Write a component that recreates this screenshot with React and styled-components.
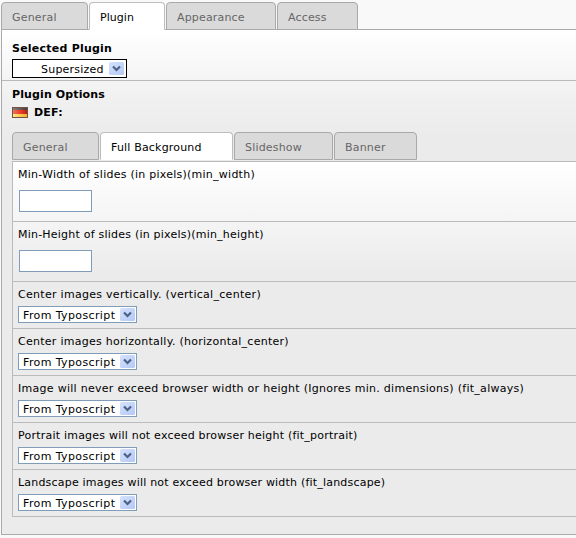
import React from "react";
import styled, { createGlobalStyle } from "styled-components";

const GlobalStyle = createGlobalStyle`
  * { box-sizing: border-box; }
  body {
    margin: 0;
    background: #f9f9f9;
    color: #000;
    font: 11px/14px Verdana, "DejaVu Sans", sans-serif;
    overflow: hidden;
  }
`;

const Page = styled.div`
  width: 576px;
  height: 538px;
  padding: 2px 0 0 1px;
  overflow: hidden;
`;

const TabBar = styled.div`
  display: flex;
  gap: 1px;
  height: ${(p) => (p.$nested ? 29 : 27)}px;
`;

const Tab = styled.div`
  flex: none;
  width: ${(p) => p.$width}px;
  height: 28px;
  padding: 8px 0 0 10px;
  border: 1px solid ${(p) => (p.$active ? "#bdbdbd" : "#a9a9a9")};
  border-bottom-color: ${(p) => (p.$active ? "#fff" : "#a9a9a9")};
  border-radius: 4px 4px 0 0;
  background: ${(p) => (p.$active ? "#fff" : "#dadada")};
  color: ${(p) => (p.$active ? "#000" : "#666")};
  line-height: 13px;
  white-space: nowrap;
  position: relative;
`;

const Text = styled.span`
  letter-spacing: ${(p) => p.$spacing || 0}px;
  white-space: nowrap;
`;

const Panel = styled.div`
  height: 506px;
  border: solid #aaa;
  border-width: 1px 0 1px 1px;
  background: linear-gradient(#fff 0, #f0f0f0 70px, #ebebeb 110px);
`;

const PluginSection = styled.section`
  height: 51px;
  padding: 12px 0 0 10px;
  border-bottom: 1px solid #b9b9b9;
`;

const OptionsSection = styled.section`
  padding: 7px 0 0 10px;
`;

const Heading = styled.div`
  height: 14px;
  font-weight: bold;
  white-space: nowrap;
`;

const Language = styled(Heading)`
  display: flex;
  align-items: center;
  gap: 6px;
  height: 20px;
  padding-top: 1px;
  margin-bottom: 10px;
`;

const Options = styled.div`
  border: solid #bbb;
  border-width: 1px 0 0 1px;
  background: linear-gradient(#fff 0, #ebebeb 112px);
`;

const Row = styled.div`
  height: ${(p) => (p.$tall ? 60 : 47)}px;
  padding: 6px 0 0 5px;
  border-bottom: 1px solid #bbb;
`;

const RowLabel = styled.div`
  height: 14px;
`;

const TextField = styled.input`
  display: block;
  width: 73px;
  height: 22px;
  margin: 8px 0 0 1px;
  padding: 0 3px;
  border: 1px solid #7f9db9;
  border-radius: 0;
  background: #fff;
  outline: none;
`;

const SelectBox = styled.div`
  display: flex;
  align-items: center;
  justify-content: space-between;
  width: ${(p) => (p.$dark ? 115 : 119)}px;
  height: ${(p) => (p.$dark ? 19 : 17)}px;
  margin-top: ${(p) => (p.$dark ? 3 : 4)}px;
  padding: 0 ${(p) => (p.$dark ? 2 : 1)}px 0 ${(p) => (p.$dark ? 28 : 4)}px;
  border: 1px solid ${(p) => (p.$dark ? "#000" : "#7f9db9")};
  background: #fff;
`;

const SelectValue = styled(Text)`
  padding-top: 2px;
`;

const Arrow = () => (
  <svg width="15" height="13" viewBox="0 0 15 13">
    <defs>
      <linearGradient id="button" x2="1" y2="1">
        <stop offset="0" stopColor="#d5e2fd" />
        <stop offset="1" stopColor="#b4c8f6" />
      </linearGradient>
    </defs>
    <rect width="15" height="13" rx="1.5" fill="url(#button)" />
    <path d="M4 4.5 7.5 8 11 4.5" fill="none" stroke="#4d6185" strokeWidth="2.2" />
  </svg>
);

const Flag = () => (
  <svg width="16" height="11" viewBox="0 0 16 11">
    <defs>
      <linearGradient id="black" x2="1">
        <stop offset="0" stopColor="#8a7a7a" />
        <stop offset="1" stopColor="#4c3838" />
      </linearGradient>
      <linearGradient id="red" x2="1">
        <stop offset="0" stopColor="#f47058" />
        <stop offset="0.5" stopColor="#ea4028" />
        <stop offset="1" stopColor="#c02010" />
      </linearGradient>
      <linearGradient id="gold" x2="1">
        <stop offset="0" stopColor="#ffe880" />
        <stop offset="1" stopColor="#f4ac28" />
      </linearGradient>
    </defs>
    <rect width="16" height="11" fill="#6e5448" />
    <rect x="1" y="1" width="14" height="3" fill="url(#black)" />
    <rect x="1" y="3" width="14" height="4" fill="url(#red)" />
    <rect x="1" y="7" width="14" height="3" fill="url(#gold)" />
  </svg>
);

const Select = ({ label, spacing, dark }) => (
  <SelectBox $dark={dark}>
    <SelectValue $spacing={spacing}>{label}</SelectValue>
    <Arrow />
  </SelectBox>
);

const mainTabs = [
  { label: "General", width: 87, spacing: 0.2 },
  { label: "Plugin", width: 76, spacing: 0.05, active: true },
  { label: "Appearance", width: 110, spacing: 0.17 },
  { label: "Access", width: 81, spacing: 0.15 },
];

const optionTabs = [
  { label: "General", width: 87, spacing: 0.2 },
  { label: "Full Background", width: 133, spacing: 0.18, active: true },
  { label: "Slideshow", width: 99, spacing: 0.18 },
  { label: "Banner", width: 83, spacing: 0.2 },
];

const rows = [
  { label: "Min-Width of slides (in pixels)(min_width)", spacing: 0.25, field: true },
  { label: "Min-Height of slides (in pixels)(min_height)", spacing: 0.22, field: true },
  { label: "Center images vertically. (vertical_center)", spacing: 0.29 },
  { label: "Center images horizontally. (horizontal_center)", spacing: 0.27 },
  { label: "Image will never exceed browser width or height (Ignores min. dimensions) (fit_always)", spacing: 0.28 },
  { label: "Portrait images will not exceed browser height (fit_portrait)", spacing: 0.22 },
  { label: "Landscape images will not exceed browser width (fit_landscape)", spacing: 0.2 },
];

const Tabs = ({ items, nested }) => (
  <TabBar $nested={nested}>
    {items.map((t) => (
      <Tab key={t.label} $width={t.width} $active={t.active}>
        <Text $spacing={t.spacing}>{t.label}</Text>
      </Tab>
    ))}
  </TabBar>
);

export default function App() {
  return (
    <>
      <GlobalStyle />
      <Page>
        <Tabs items={mainTabs} />
        <Panel>
          <PluginSection>
            <Heading><Text $spacing={0.23}>Selected Plugin</Text></Heading>
            <Select dark label="Supersized" spacing={0.22} />
          </PluginSection>
          <OptionsSection>
            <Heading><Text $spacing={0.12}>Plugin Options</Text></Heading>
            <Language><Flag /><Text $spacing={0.2}>DEF:</Text></Language>
            <Tabs items={optionTabs} nested />
            <Options>
              {rows.map((r) => (
                <Row key={r.label} $tall={r.field}>
                  <RowLabel><Text $spacing={r.spacing}>{r.label}</Text></RowLabel>
                  {r.field ? (
                    <TextField aria-label={r.label} />
                  ) : (
                    <Select label="From Typoscript" spacing={0.38} />
                  )}
                </Row>
              ))}
            </Options>
          </OptionsSection>
        </Panel>
      </Page>
    </>
  );
}
